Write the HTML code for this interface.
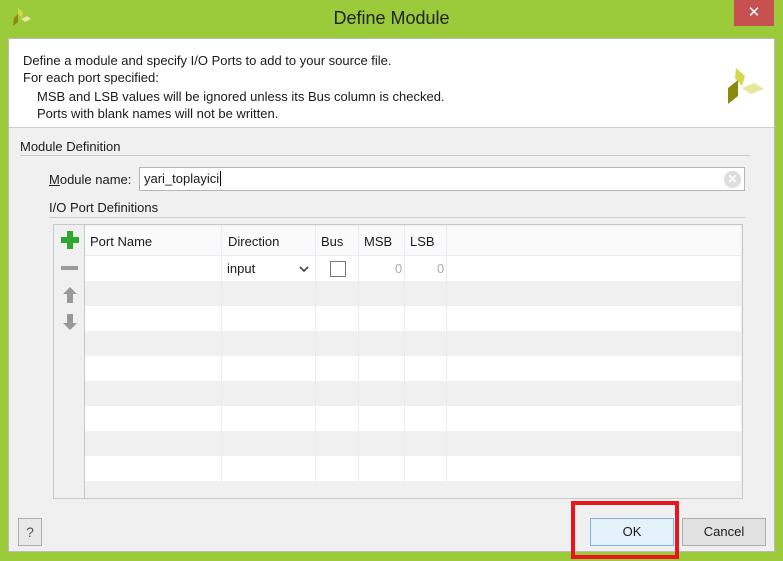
<!DOCTYPE html>
<html><head><style>
*{margin:0;padding:0;box-sizing:border-box}
body{width:783px;height:561px;background:#9bcb3b;position:relative;overflow:hidden;font-family:"Liberation Sans",sans-serif;font-size:13px;color:#1a1a1a}
.a{position:absolute}
.t{position:absolute;white-space:nowrap}
.h{font-size:13px}
</style></head><body>
<div class="t" style="left:0;width:783px;top:8px;text-align:center;font-size:18px;color:#222">Define Module</div>
<div class="a" style="left:734px;top:0;width:40px;height:26px;background:#c75050;color:#fff;font-size:15px;text-align:center;line-height:26px">✕</div>
<svg class="a" style="left:10px;top:8px" width="24" height="20" viewBox="0 0 24 20"><polygon points="8,0 13,4 12,10 8,6" fill="#d4d84a"/><polygon points="4,10 8,6 8,14 3,18" fill="#8a8a10"/><polygon points="11,11 17,8 21,11 15,14" fill="#e5eaa0"/></svg>
<div class="a" style="left:8px;top:38px;width:767px;height:514px;background:#f0f0f0;border:1px solid #bbb"></div>
<div class="a" style="left:9px;top:39px;width:765px;height:89px;background:#fff;border-bottom:1px solid #ccc"></div>
<div class="t h" style="left:23px;top:53px">Define a module and specify I/O Ports to add to your source file.</div>
<div class="t h" style="left:23px;top:70px">For each port specified:</div>
<div class="t h" style="left:37px;top:89px">MSB and LSB values will be ignored unless its Bus column is checked.</div>
<div class="t h" style="left:37px;top:106px">Ports with blank names will not be written.</div>
<svg class="a" style="left:726px;top:66px" width="40" height="40" viewBox="0 0 40 40"><polygon points="10,2 19,10 16,20 9,12" fill="#d4d84a"/><polygon points="2,22 12,14 12,30 2,38" fill="#8a8a10"/><polygon points="16,22 28,17 38,23 25,28" fill="#e3e89a"/></svg>
<div class="t" style="left:20px;top:139px">Module Definition</div>
<div class="a" style="left:20px;top:155px;width:730px;height:1px;background:#ccc"></div>
<div class="t" style="left:49px;top:172px"><u>M</u>odule name:</div>
<div class="a" style="left:139px;top:167px;width:606px;height:24px;background:#fff;border:1px solid #b5b5b5"></div>
<div class="t" style="left:144px;top:171px">yari_toplayici<span style="border-left:1px solid #000;margin-left:1px"></span></div>
<div class="a" style="left:724px;top:171px;width:17px;height:17px;border-radius:50%;background:#ddd;color:#fff;font-size:12px;text-align:center;line-height:17px;font-weight:bold">✕</div>
<div class="t" style="left:49px;top:200px">I/O Port Definitions</div>
<div class="a" style="left:49px;top:217px;width:696px;height:1px;background:#ccc"></div>
<div class="a" style="left:53px;top:224px;width:690px;height:275px;border:1px solid #c8c8c8;background:#f0f0f0"></div>
<div class="a" style="left:84px;top:225px;width:1px;height:273px;background:#c8c8c8"></div>
<div class="a" style="left:85px;top:226px;width:656px;height:30px;background:#fafafa;border-bottom:1px solid #e8eef5"></div>
<div class="a" style="left:85px;top:256px;width:656px;height:25px;background:#fff"></div>
<div class="a" style="left:85px;top:306px;width:656px;height:25px;background:#fff"></div>
<div class="a" style="left:85px;top:356px;width:656px;height:25px;background:#fff"></div>
<div class="a" style="left:85px;top:406px;width:656px;height:25px;background:#fff"></div>
<div class="a" style="left:85px;top:456px;width:656px;height:25px;background:#fff"></div>
<div class="a" style="left:221px;top:226px;width:1px;height:255px;background:#e8edf3"></div>
<div class="a" style="left:315px;top:226px;width:1px;height:255px;background:#e8edf3"></div>
<div class="a" style="left:358px;top:226px;width:1px;height:255px;background:#e8edf3"></div>
<div class="a" style="left:404px;top:226px;width:1px;height:255px;background:#e8edf3"></div>
<div class="a" style="left:446px;top:226px;width:1px;height:255px;background:#e8edf3"></div>
<div class="t" style="left:90px;top:234px">Port Name</div>
<div class="t" style="left:228px;top:234px">Direction</div>
<div class="t" style="left:321px;top:234px">Bus</div>
<div class="t" style="left:364px;top:234px">MSB</div>
<div class="t" style="left:410px;top:234px">LSB</div>
<div class="t" style="left:227px;top:261px">input</div>
<svg class="a" style="left:299px;top:266px" width="10" height="7"><path d="M1 1L5 5L9 1" stroke="#444" stroke-width="1.6" fill="none"/></svg>
<div class="a" style="left:330px;top:261px;width:16px;height:16px;border:1px solid #777;background:#fff"></div>
<div class="t" style="left:395px;top:261px;color:#aaa">0</div>
<div class="t" style="left:437px;top:261px;color:#aaa">0</div>
<svg class="a" style="left:61px;top:231px" width="18" height="18"><rect x="6" y="0" width="6" height="18" fill="#2ea82e"/><rect x="0" y="6" width="18" height="6" fill="#2ea82e"/></svg>
<div class="a" style="left:61px;top:266px;width:17px;height:4px;background:#9a9a9a"></div>
<svg class="a" style="left:62px;top:287px" width="16" height="16"><path d="M8 0L15 7H11V16H5V7H1Z" fill="#999"/></svg>
<svg class="a" style="left:62px;top:314px" width="16" height="16"><path d="M8 16L15 9H11V0H5V9H1Z" fill="#999"/></svg>
<div class="a" style="left:18px;top:518px;width:24px;height:28px;border:1px solid #adadad;background:#e8e8e8;text-align:center;line-height:26px;color:#555;font-size:14px">?</div>
<div class="a" style="left:590px;top:518px;width:84px;height:28px;border:1px solid #7eb4ea;background:#e5f1fb;text-align:center;line-height:26px">OK</div>
<div class="a" style="left:682px;top:518px;width:84px;height:28px;border:1px solid #adadad;background:#e1e1e1;text-align:center;line-height:26px">Cancel</div>
<div class="a" style="left:571px;top:501px;width:108px;height:58px;border:4px solid #e8141e"></div>
</body></html>
